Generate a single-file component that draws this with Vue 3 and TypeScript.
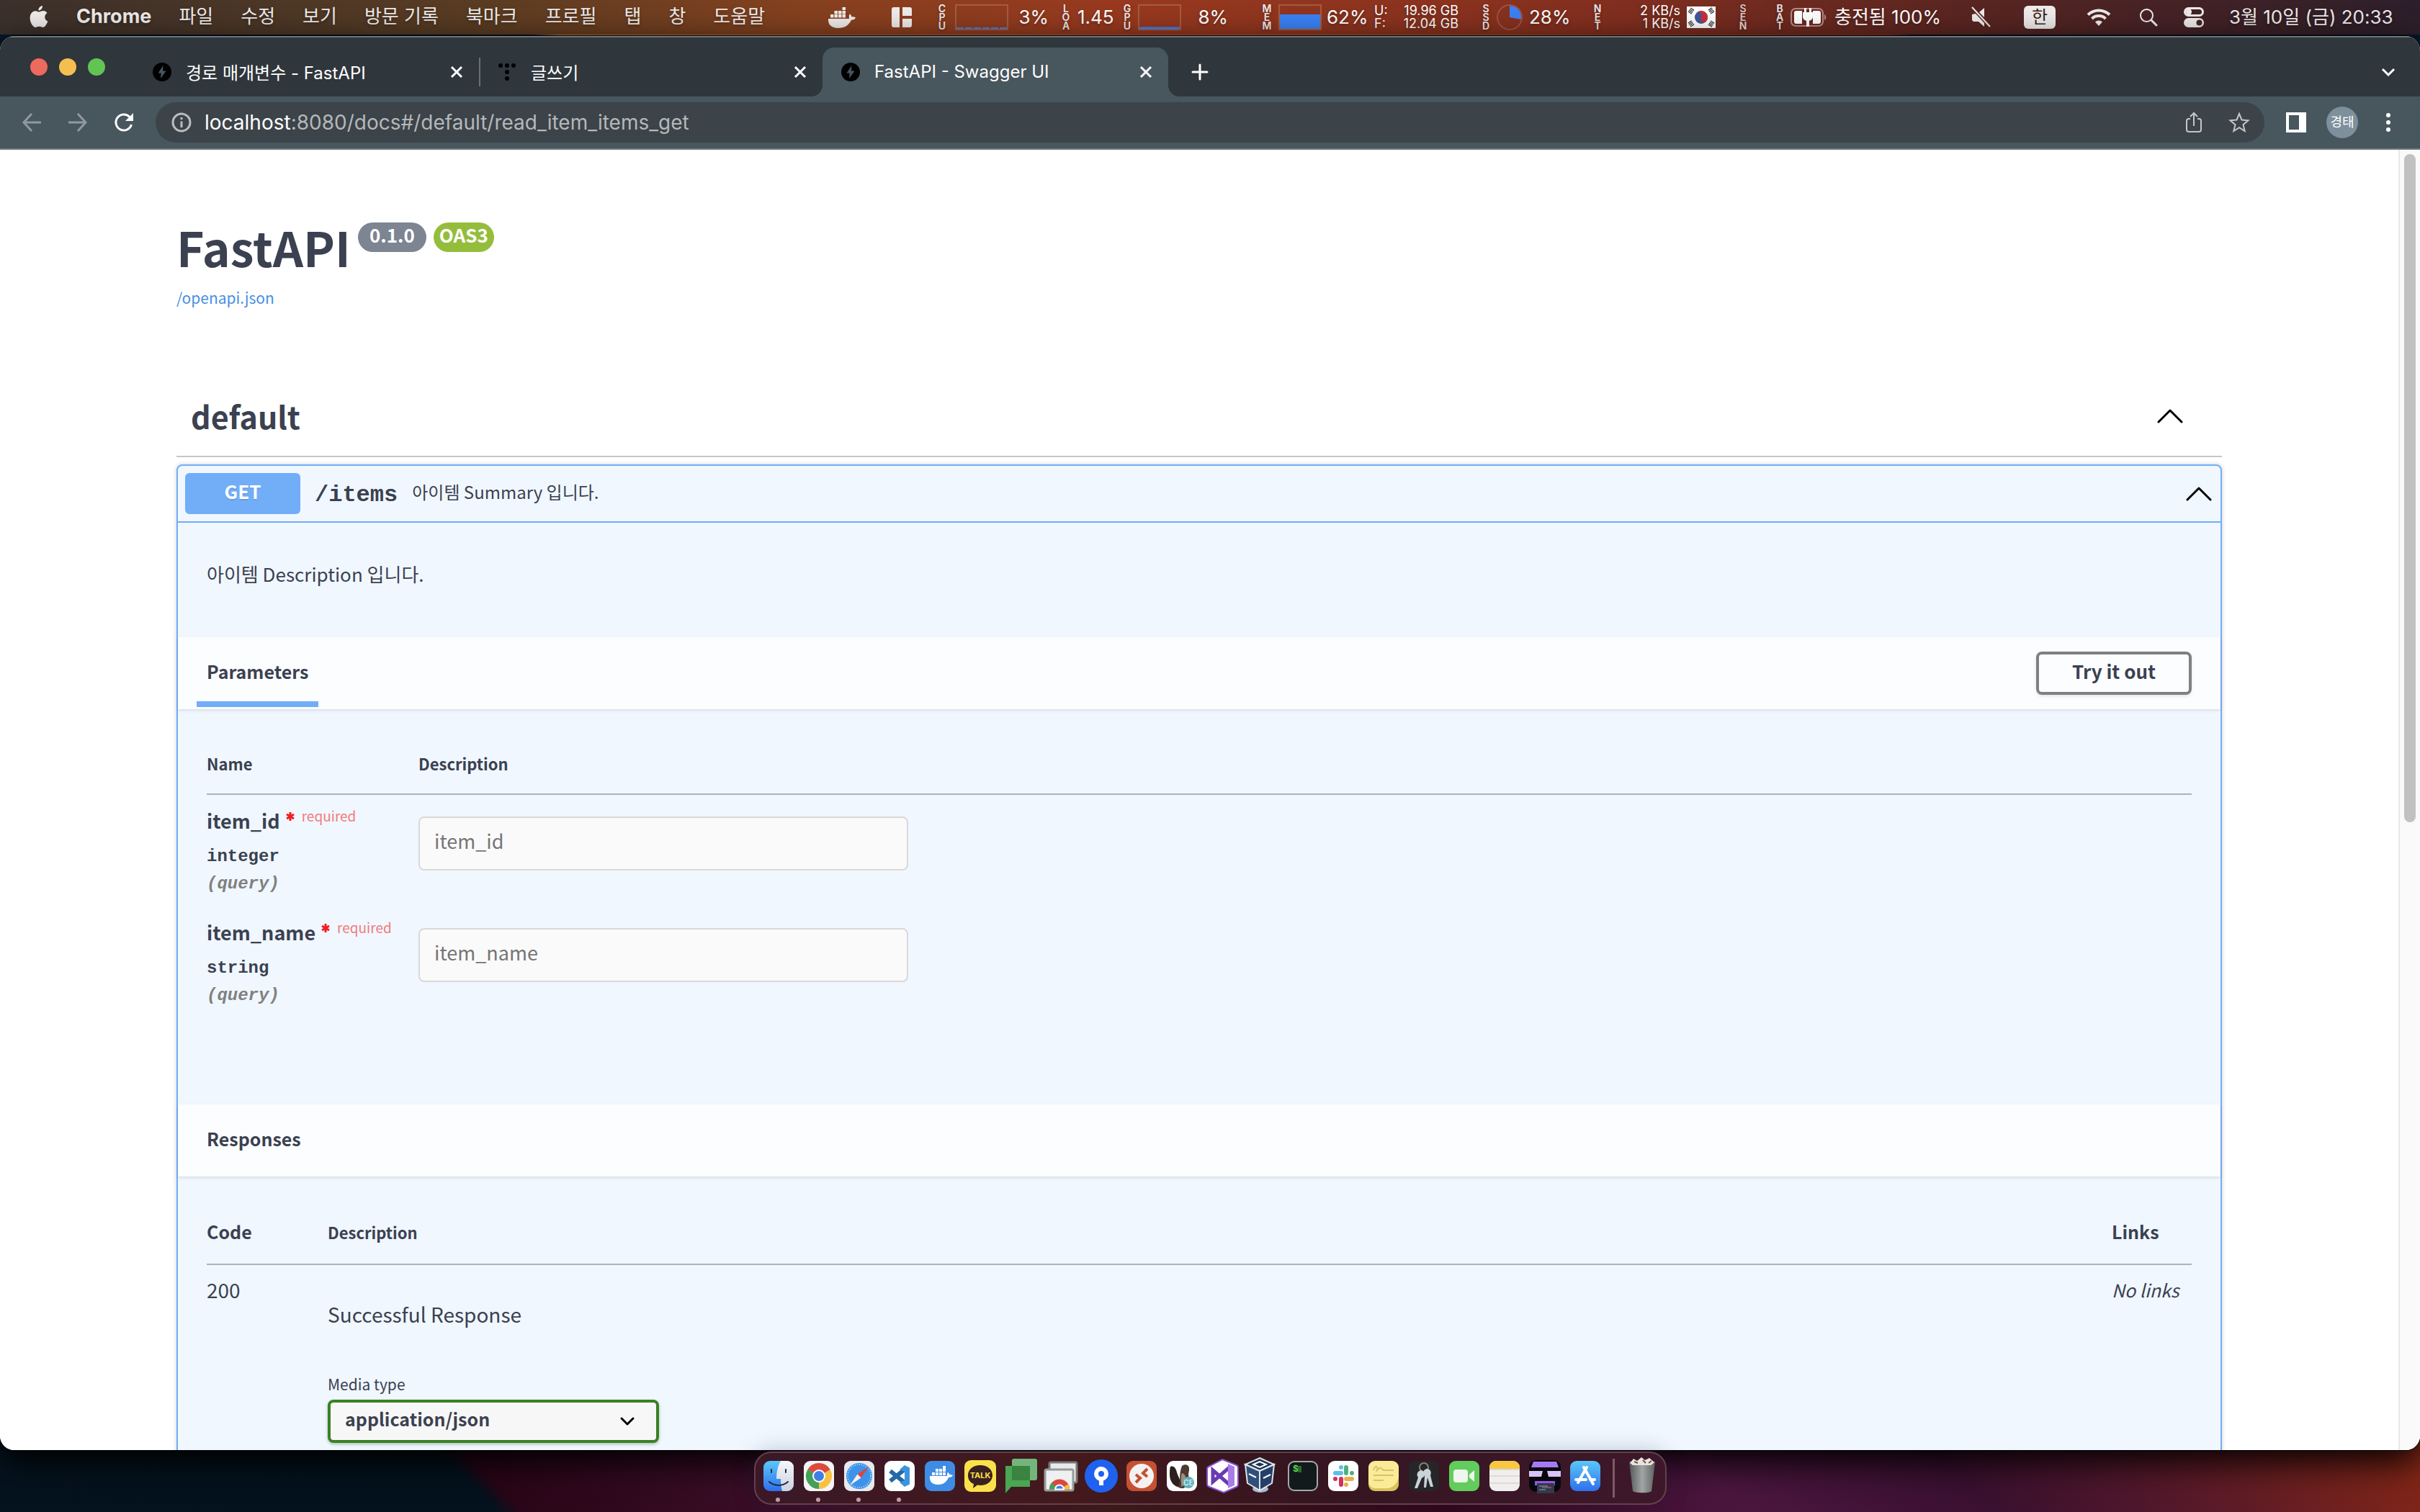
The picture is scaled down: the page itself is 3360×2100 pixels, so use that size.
<script setup lang="ts">
import { ref } from 'vue'

interface Param {
  name: string
  type: string
  place: string
}

interface Tab {
  title: string
  icon: 'bolt' | 'dots'
  active: boolean
}

const menus: string[] = ['파일', '수정', '보기', '방문 기록', '북마크', '프로필', '탭', '창', '도움말']

const tabs: Tab[] = [
  { title: '경로 매개변수 - FastAPI', icon: 'bolt', active: false },
  { title: '글쓰기', icon: 'dots', active: false },
  { title: 'FastAPI - Swagger UI', icon: 'bolt', active: true },
]

const params: Param[] = [
  { name: 'item_id', type: 'integer', place: '(query)' },
  { name: 'item_name', type: 'string', place: '(query)' },
]

const mediaType = ref('application/json')
</script>

<template>
  <div class="desktop">
    <header class="menubar">
      <nav class="menus">
        <svg class="apple" viewBox="0 0 26 32" aria-hidden="true">
          <path fill="#eeebea" d="M18 1c.3 3.600-2.600 6.600-5.600 6.600C12 4.400 15 1.300 18 1zM13.300 9.600c1.600 0 3-1.600 5.700-1.600 2.200 0 4.200 1.100 5.500 3-4.800 3-4 9.700.9 11.600C24 26.500 21.400 31 18.700 31c-2 0-2.700-1.200-5.200-1.200S10.200 31 8.400 31C4.700 31 .6 23.800.6 18.200.6 12 4.200 8.200 8.200 8.200c2.300 0 3.800 1.400 5.100 1.400z" />
        </svg>
        <strong class="app-name">Chrome</strong>
        <span v-for="m in menus" :key="m">{{ m }}</span>
      </nav>
      <div class="status">
        <svg width="44" height="32" viewBox="0 0 44 32" aria-hidden="true">
          <g fill="#eeebea">
            <path d="M5 18h29c.2-2-1-4 .8-6.500 1.700 1 2.500 2.600 2.500 4 2-.5 4 0 5.700 1-1 2.200-3 3.200-6 3.200C34 27 27 31 19 31 9 31 4.500 26 5 18z" />
            <path d="M8 12h4.500v4.500H8zM13.500 12H18v4.500h-4.500zM19 12h4.500v4.500H19zM24.500 12H29v4.500h-4.500zM13.500 7H18v4.500h-4.500zM19 7h4.500v4.500H19zM24.500 7H29v4.500h-4.500zM24.500 2H29v4h-4.500z" />
          </g>
        </svg>
        <svg width="40" height="30" viewBox="0 0 40 30" aria-hidden="true">
          <path fill="#eeebea" d="M9 1h8v28H9a3 3 0 0 1-3-3V4a3 3 0 0 1 3-3zM21 1h10a3 3 0 0 1 3 3v9H21zM21 17h13v9a3 3 0 0 1-3 3H21z" />
        </svg>
        <span class="vlabel"><i>C</i><i>P</i><i>U</i></span>
        <svg width="74" height="36" viewBox="0 0 74 36" aria-hidden="true">
          <rect x="1" y="1" width="72" height="34" fill="none" stroke="#a55c40" stroke-width="2" />
          <path stroke="#3b82f6" stroke-width="2" stroke-dasharray="10 2" d="M2 33h70" />
        </svg>
        <span class="figure end16">3%</span>
        <span class="vlabel"><i>L</i><i>O</i><i>A</i></span>
        <span class="figure">1.45</span>
        <span class="vlabel"><i>G</i><i>P</i><i>U</i></span>
        <svg width="60" height="36" viewBox="0 0 60 36" aria-hidden="true">
          <rect x="1" y="1" width="58" height="34" fill="none" stroke="#a55c40" stroke-width="2" />
          <path stroke="#3b82f6" stroke-width="3" d="M2 33h56" />
        </svg>
        <span class="figure end46">8%</span>
        <span class="vlabel"><i>M</i><i>E</i><i>M</i></span>
        <svg width="60" height="36" viewBox="0 0 60 36" aria-hidden="true">
          <rect x="1" y="1" width="58" height="34" fill="none" stroke="#a55c40" stroke-width="2" />
          <path fill="#3b82f6" d="M2 14h56v20H2z" />
        </svg>
        <span class="figure">62%</span>
        <span class="pair"><i>U:</i><i>F:</i></span>
        <span class="pair right end30"><i>19.96 GB</i><i>12.04 GB</i></span>
        <span class="vlabel"><i>S</i><i>S</i><i>D</i></span>
        <svg width="36" height="36" viewBox="0 0 36 36" aria-hidden="true">
          <circle cx="18" cy="18" r="17" fill="none" stroke="#a0523f" stroke-width="2" />
          <path fill="#3b82f6" d="M18 18V2a16 16 0 0 1 15.700 19z" />
        </svg>
        <span class="figure">28%</span>
        <span class="vlabel"><i>N</i><i>E</i><i>T</i></span>
        <span class="pair right end9"><i>2 KB/s</i><i>1 KB/s</i></span>
        <svg width="40" height="30" viewBox="0 0 40 30" aria-hidden="true">
          <path fill="#fff" d="M0 0h40v30H0z" />
          <circle cx="20" cy="15" r="9" fill="#3f57a0" />
          <path fill="#c8303a" d="M12.500 10a9 9 0 0 1 15 10 4.500 4.500 0 0 1-7.500-5 4.500 4.500 0 0 0-7.500-5z" />
          <path stroke="#111" stroke-width="6" stroke-dasharray="1 1" d="M4 9l4-6M32 3l4 6M4 21l4 6M32 27l4-6" />
        </svg>
        <span class="vlabel dim"><i>S</i><i>E</i><i>N</i></span>
        <span class="vlabel"><i>B</i><i>A</i><i>T</i></span>
        <svg width="50" height="26" viewBox="0 0 50 26" aria-hidden="true">
          <rect x="1" y="1" width="44" height="24" rx="6" fill="none" stroke="#b88a85" stroke-width="2" />
          <path fill="#b88a85" d="M47 9c3 1 3 7 0 8z" />
          <path fill="#fff" d="M8 4h8v18H8a3 3 0 0 1-3-3V7a3 3 0 0 1 3-3zM31 4h8a3 3 0 0 1 3 3v12a3 3 0 0 1-3 3h-8zM19 0h3v6h4V0h3v6h2v6c0 4-3 5-5 6v8h-4v-8c-2-1-5-2-5-6V6h2z" />
        </svg>
        <span class="figure">충전됨 100%</span>
        <svg width="32" height="30" viewBox="0 0 32 30" aria-hidden="true">
          <path fill="#eeebea" d="M4 11l5-1 12 13V28l-8-7H6l-2-2zM14 8l7-6v13z" />
          <path stroke="#eeebea" stroke-width="2" d="M4 1l25 27" />
        </svg>
        <span class="ime">한</span>
        <svg width="34" height="26" viewBox="0 0 34 26" aria-hidden="true">
          <g fill="none" stroke="#eeebea" stroke-width="4">
            <path d="M2 9.500a21.500 21.500 0 0 1 30 0M7.500 15a13.500 13.500 0 0 1 19 0" />
          </g>
          <path fill="#eeebea" d="M17 25l-5-5.500a7 7 0 0 1 10 0z" />
        </svg>
        <svg width="26" height="26" viewBox="0 0 26 26" aria-hidden="true">
          <path fill="none" stroke="#eeebea" stroke-width="3" stroke-linecap="round" d="M17 17l7 7" />
          <circle cx="10.500" cy="10.500" r="8.500" fill="none" stroke="#eeebea" stroke-width="2" />
        </svg>
        <svg width="28" height="28" viewBox="0 0 28 28" aria-hidden="true">
          <rect x="1.500" y="1.500" width="25" height="10" rx="5" fill="none" stroke="#eeebea" stroke-width="3" />
          <circle cx="7" cy="6.500" r="4" fill="#eeebea" />
          <rect y="15" width="28" height="13" rx="6.500" fill="#eeebea" />
          <circle cx="21.500" cy="21.500" r="4" fill="#4a2126" />
        </svg>
        <time class="clock">3월 10일 (금) 20:33</time>
      </div>
    </header>

    <section class="window">
      <div class="tabstrip">
        <div class="lights"><i class="red"></i><i class="amber"></i><i class="green"></i></div>
        <div v-for="t in tabs" :key="t.title" class="tab" :class="{ active: t.active }">
          <svg v-if="t.icon === 'bolt'" class="favicon" viewBox="0 0 26 26" aria-hidden="true">
            <circle cx="13" cy="13" r="13" fill="#000" />
            <path class="bolt" d="M14.500 4L7.500 14.500h4.200L11 22l7.500-10.500h-4.500z" />
          </svg>
          <svg v-else class="favicon" viewBox="0 0 26 26" aria-hidden="true">
            <path stroke="#000" stroke-width="6" stroke-linecap="round" d="M4 4h0M13 4h0M22 4h0M13 13h0M13 22h0" />
          </svg>
          <span class="tab-title">{{ t.title }}</span>
          <button class="icon-btn" type="button" aria-label="Close tab">
            <svg width="18" height="18" viewBox="0 0 18 18"><path stroke="#fff" stroke-width="3" d="M2 2l14 14M16 2L2 16" /></svg>
          </button>
        </div>
        <button class="icon-btn new-tab" type="button" aria-label="New tab">
          <svg width="24" height="24" viewBox="0 0 24 24"><path stroke="#fff" stroke-width="3" stroke-linecap="round" d="M12 2v20M2 12h20" /></svg>
        </button>
        <button class="icon-btn tab-search" type="button" aria-label="Search tabs">
          <svg width="20" height="12" viewBox="0 0 20 12"><path fill="none" stroke="#fff" stroke-width="3" d="M2 2l8 8 8-8" /></svg>
        </button>
      </div>

      <div class="toolbar">
        <button class="icon-btn" type="button" aria-label="Back">
          <svg width="28" height="28" viewBox="0 0 28 28"><path fill="none" stroke="#8f999f" stroke-width="3" d="M27 14H3M14 2L3 14l11 12" /></svg>
        </button>
        <button class="icon-btn" type="button" aria-label="Forward">
          <svg width="28" height="28" viewBox="0 0 28 28"><path fill="none" stroke="#8f999f" stroke-width="3" d="M1 14h24M14 2l11 12-11 12" /></svg>
        </button>
        <button class="icon-btn" type="button" aria-label="Reload">
          <svg width="28" height="28" viewBox="0 0 28 28"><path fill="none" stroke="#fff" stroke-width="3" d="M24.500 17A11 11 0 1 1 22 6.500" /><path fill="#fff" d="M27 1v11H16z" /></svg>
        </button>
        <div class="omnibox">
          <svg width="28" height="28" viewBox="0 0 28 28" aria-hidden="true">
            <circle cx="14" cy="14" r="12" fill="none" stroke="#b9bdc0" stroke-width="3" />
            <path stroke="#b9bdc0" stroke-width="3" d="M14 12.500V21M14 7v3" />
          </svg>
          <span class="url"><b>localhost</b>:8080/docs#/default/read_item_items_get</span>
          <button class="icon-btn" type="button" aria-label="Share">
            <svg width="24" height="30" viewBox="0 0 24 30"><path fill="none" stroke="#c3c6c8" stroke-width="2" d="M7 10H5a3 3 0 0 0-3 3v12a3 3 0 0 0 3 3h14a3 3 0 0 0 3-3V13a3 3 0 0 0-3-3h-2M12 20V3M7 7l5-5 5 5" /></svg>
          </button>
          <button class="icon-btn" type="button" aria-label="Bookmark">
            <svg width="30" height="30" viewBox="0 0 30 30"><path fill="none" stroke="#c3c6c8" stroke-width="2" d="M15 3l3.500 8.500 9 .7-7 6 2.200 8.800L15 22.200 7.300 27l2.200-8.800-7-6 9-.7z" /></svg>
          </button>
        </div>
        <button class="icon-btn" type="button" aria-label="Side panel">
          <svg width="28" height="28" viewBox="0 0 28 28"><path fill="#fff" d="M0 0h28v28H0zM4 4v20h14V4z" fill-rule="evenodd" /></svg>
        </button>
        <span class="avatar">경태</span>
        <button class="icon-btn more" type="button" aria-label="Menu">
          <svg width="8" height="28" viewBox="0 0 8 28"><path stroke="#fff" stroke-width="6" stroke-linecap="round" d="M4 4h0M4 14h0M4 24h0" /></svg>
        </button>
      </div>

      <div class="viewport">
        <main class="page">
          <div class="info">
            <h1>FastAPI</h1>
            <span class="badge">0.1.0</span>
            <span class="badge oas">OAS3</span>
          </div>
          <a class="spec-link" href="#openapi">/openapi.json</a>

          <h3 class="tag">
            <span>default</span>
            <svg width="36" height="20" viewBox="0 0 36 20" aria-hidden="true"><path fill="none" stroke="#000" stroke-width="3" stroke-linecap="round" stroke-linejoin="round" d="M2 18L18 2l16 16" /></svg>
          </h3>

          <article class="opblock">
            <div class="summary">
              <button class="method" type="button">GET</button>
              <span class="path">/items</span>
              <span class="summary-text">아이템 Summary 입니다.</span>
              <svg width="36" height="20" viewBox="0 0 36 20" aria-hidden="true"><path fill="none" stroke="#000" stroke-width="3" stroke-linecap="round" stroke-linejoin="round" d="M2 18L18 2l16 16" /></svg>
            </div>
            <p class="description">아이템 Description 입니다.</p>

            <div class="section-head">
              <h4 class="tab-item">Parameters</h4>
              <button class="try" type="button">Try it out</button>
            </div>
            <div class="params">
              <table>
                <thead>
                  <tr><th class="c-name">Name</th><th>Description</th></tr>
                </thead>
                <tbody>
                  <tr v-for="p in params" :key="p.name">
                    <td>
                      <div class="p-name">
                        <label :for="p.name">{{ p.name }}</label>
                        <svg width="12" height="12" viewBox="0 0 12 12" aria-hidden="true"><path stroke="#f01e1e" stroke-width="3" d="M6 0v12M1 3l10 6M11 3L1 9" /></svg>
                        <span>required</span>
                      </div>
                      <div class="p-type">{{ p.type }}</div>
                      <div class="p-in">{{ p.place }}</div>
                    </td>
                    <td class="p-input"><input :id="p.name" type="text" :placeholder="p.name" /></td>
                  </tr>
                </tbody>
              </table>
            </div>

            <div class="section-head"><h4>Responses</h4></div>
            <div class="responses">
              <table>
                <thead>
                  <tr><th class="c-code big">Code</th><th>Description</th><th class="c-links big">Links</th></tr>
                </thead>
                <tbody>
                  <tr>
                    <td class="status-code">200</td>
                    <td class="resp">
                      <p>Successful Response</p>
                      <label for="media">Media type</label>
                      <div class="select">
                        <select id="media" v-model="mediaType">
                          <option>application/json</option>
                        </select>
                        <svg width="22" height="14" viewBox="0 0 22 14" aria-hidden="true"><path fill="none" stroke="#000" stroke-width="3" stroke-linecap="round" stroke-linejoin="round" d="M3 3l8 8 8-8" /></svg>
                      </div>
                    </td>
                    <td><i>No links</i></td>
                  </tr>
                </tbody>
              </table>
            </div>
          </article>
        </main>
        <div class="scrollbar"><div class="thumb"></div></div>
      </div>
    </section>

    <footer class="dock-area">
      <div class="dock">
        <div class="slot running">
          <svg viewBox="0 0 56 56" aria-label="Finder">
            <defs>
              <linearGradient id="fi" x2="0" y2="1"><stop stop-color="#5ac8fa" /><stop offset="1" stop-color="#2f6fea" /></linearGradient>
              <linearGradient id="gr" x2="0" y2="1"><stop stop-color="#f5f7fa" /><stop offset="1" stop-color="#ccd3df" /></linearGradient>
            </defs>
            <rect x="7" y="7" width="42" height="42" rx="9" fill="url(#fi)" />
            <path fill="url(#gr)" d="M31 7h9a9 9 0 0 1 9 9v24a9 9 0 0 1-9 9h-7c-1.500-5-2-10-2-17h-6c0-10 2-18 6-25z" />
            <path fill="none" stroke="#1d2c45" stroke-width="2" stroke-linecap="round" d="M18 19v4M38 19v4M15 36c7 6.500 19 6.500 26 0" />
          </svg>
        </div>
        <div class="slot running">
          <svg viewBox="0 0 56 56" aria-label="Chrome">
            <rect x="7" y="7" width="42" height="42" rx="9" fill="#f4f4f4" />
            <path fill="#dd4b3e" d="M28 28L12.400 19a18 18 0 0 1 31.200 0z" />
            <path fill="#f7c244" d="M28 28l15.600-9A18 18 0 0 1 28 46z" />
            <path fill="#44a058" d="M28 28v18A18 18 0 0 1 12.400 19z" />
            <path fill="#dd4b3e" d="M28 19h15.600L28 28z" />
            <path fill="#44a058" d="M12.400 19l7.800 13.500L28 28z" />
            <path fill="#f7c244" d="M28 46l7.800-13.500L28 28z" />
            <circle cx="28" cy="28" r="9" fill="#fff" /><circle cx="28" cy="28" r="7" fill="#3f7ee8" />
          </svg>
        </div>
        <div class="slot running">
          <svg viewBox="0 0 56 56" aria-label="Safari">
            <rect x="7" y="7" width="42" height="42" rx="9" fill="#e8eaed" />
            <circle cx="28" cy="28" r="18" fill="#3d93ea" />
            <circle cx="28" cy="28" r="16" fill="none" stroke="#b5dafa" stroke-width="2" stroke-dasharray="1 2" />
            <path fill="#e04338" d="M41 15L30.500 30.500l-5-5z" /><path fill="#f4f4f4" d="M15 41l10.500-15.500 5 5z" />
          </svg>
        </div>
        <div class="slot running">
          <svg viewBox="0 0 56 56" aria-label="Visual Studio Code">
            <rect x="7" y="7" width="42" height="42" rx="9" fill="#fff" />
            <path fill="none" stroke="#2468a8" stroke-width="6" d="M15 21l21 17M15 35l21-17" />
            <path fill="#3b95dc" d="M35 13l7 3.500v23L35 43l-7-6 7-3V22l-7-3z" />
          </svg>
        </div>
        <div class="slot">
          <svg viewBox="0 0 56 56" aria-label="Docker">
            <rect x="7" y="7" width="42" height="42" rx="9" fill="#3f8ce5" />
            <path fill="#fff" d="M14 28h24c0-2 0-4 1-5 2 1 2 2 2 3 2 0 3 0 5 1-1 2-3 3-6 3-3 7-8 10-15 10-8 0-12-5-11-12z" />
            <path stroke="#fff" stroke-width="4" stroke-dasharray="4 1" d="M17 25h19M22 20h14" /><path fill="#fff" d="M32 14h4v4h-4z" />
          </svg>
        </div>
        <div class="slot">
          <svg viewBox="0 0 56 56" aria-label="KakaoTalk">
            <rect x="6" y="6" width="44" height="44" rx="9" fill="#fae14b" />
            <path fill="#3b2020" d="M28 13c10 0 17 6 17 14s-7 14-17 14l-4-.5-6 4.500 1-6c-5-2-8-6-8-12 0-8 7-14 17-14z" />
            <text x="28" y="31" text-anchor="middle" font-size="11" font-weight="700" fill="#fae14b">TALK</text>
          </svg>
        </div>
        <div class="slot">
          <svg viewBox="0 0 56 56" aria-label="Chat">
            <path fill="#49a652" d="M7 14h34v29H15l-8 9z" />
            <rect x="16" y="4" width="35" height="30" rx="3" fill="#74b57c" />
            <path fill="#3b8340" d="M16 14h25v20H16z" />
          </svg>
        </div>
        <div class="slot">
          <svg viewBox="0 0 56 56" aria-label="Remote Desktop">
            <rect x="12" y="9" width="38" height="28" rx="2" fill="#e9eaeb" stroke="#777" stroke-width="3" />
            <rect x="6" y="19" width="39" height="29" rx="2" fill="#eff0f1" stroke="#98999a" stroke-width="3" />
            <path fill="#d9493c" d="M12 46.500a14 14 0 0 1 28 0z" /><path fill="#44a058" d="M12 46.500a14 14 0 0 1 3-9l11 9z" /><path fill="#f7c244" d="M40 46.500a14 14 0 0 0-2-7l-12 7z" />
            <path fill="#3f7ee8" stroke="#fff" stroke-width="2" d="M20 46.500a6 6 0 0 1 12 0z" />
          </svg>
        </div>
        <div class="slot">
          <svg viewBox="0 0 56 56" aria-label="Sourcetree">
            <circle cx="28" cy="28" r="23" fill="#2062f0" />
            <circle cx="28" cy="25" r="7" fill="none" stroke="#fff" stroke-width="6" /><path stroke="#fff" stroke-width="6" d="M28 32v9" />
          </svg>
        </div>
        <div class="slot">
          <svg viewBox="0 0 56 56" aria-label="Remote">
            <rect x="7" y="7" width="42" height="42" rx="9" fill="#c55032" />
            <circle cx="28" cy="28" r="17" fill="#f4f2f1" />
            <path fill="none" stroke="#c55032" stroke-width="4" d="M20 26l6 5-6 6M36 18l-6 6 6 5" />
          </svg>
        </div>
        <div class="slot">
          <svg viewBox="0 0 56 56" aria-label="DBeaver">
            <rect x="7" y="7" width="42" height="42" rx="9" fill="#fff" />
            <path fill="#2c211d" d="M12 15c5-2 8 3 9 8 2 7 6 10 5 21-9-1-15-8-15-18 0-4 0-8 1-11z" />
            <path fill="#4c3a30" d="M28 14c5-4 11-1 10 5 0 4-2 6 0 11 2 6-1 12-8 15-3 0-6 0-7-2 4-6 0-16 5-29z" />
            <path fill="#a58b76" d="M28 24c4 0 6 5 5 11-1 4-3 7-6 8 1-6-2-11 1-19z" />
            <circle cx="37" cy="37" r="8" fill="#5fb0bd" />
            <text x="37" y="41" text-anchor="middle" font-size="10" fill="#fff">CE</text>
          </svg>
        </div>
        <div class="slot">
          <svg viewBox="0 0 56 56" aria-label="Visual Studio">
            <path fill="#fff" stroke="#8350cf" stroke-width="2" d="M28 5l20 8q2 1 2 3v24q0 2-2 3l-18 8-20-8q-3-1-3-4V18q0-2 2-3z" />
            <path fill="none" stroke="#6a3bb0" stroke-width="5" d="M38 16L15 36V20l23 20" />
            <path fill="#a97de8" d="M36 11l9 4v26l-9 4z" />
          </svg>
        </div>
        <div class="slot">
          <svg viewBox="0 0 56 56" aria-label="VirtualBox">
            <ellipse cx="25" cy="46" rx="11" ry="5" fill="#aab9cc" />
            <path fill="#1d3450" stroke="#dfe6ee" stroke-width="2" d="M24 3l20 9-20 9L4 12z" />
            <path fill="#30507a" stroke="#dfe6ee" stroke-width="2" d="M4 12l20 9v27L7 38z" />
            <path fill="#24406a" stroke="#dfe6ee" stroke-width="2" d="M44 12l-20 9v27l17-10z" />
            <path fill="none" stroke="#fff" stroke-width="2" d="M15 12l9-4 9 4-9 4zM9 25l10 5M29 31l10-5" />
          </svg>
        </div>
        <div class="slot">
          <svg viewBox="0 0 56 56" aria-label="Terminal">
            <rect x="8" y="8" width="40" height="40" rx="8" fill="#131a1c" stroke="#a4a8aa" stroke-width="2" />
            <text x="14" y="22" font-size="12" font-weight="700" fill="#55d34c">$</text>
            <path fill="#2b6b29" d="M21 14h5v9h-5z" />
          </svg>
        </div>
        <div class="slot">
          <svg viewBox="0 0 56 56" aria-label="Slack">
            <rect x="7" y="7" width="42" height="42" rx="9" fill="#fff" />
            <g stroke-width="6" stroke-linecap="round">
              <path stroke="#5cc0ea" d="M17 24h8M25 16h0" /><path stroke="#4fb081" d="M32 16v8M40 24h0" />
              <path stroke="#e6b04a" d="M32 32h8M32 40h0" /><path stroke="#d2315c" d="M25 32v8M17 32h0" />
            </g>
          </svg>
        </div>
        <div class="slot">
          <svg viewBox="0 0 56 56" aria-label="Stickies">
            <rect x="7" y="9" width="42" height="40" rx="9" fill="#d8c35e" />
            <path fill="#faec97" d="M16 7h24a9 9 0 0 1 9 9v14c-2 8-7 13-14 15H16a9 9 0 0 1-9-9V16a9 9 0 0 1 9-9z" />
            <path fill="none" stroke="#d8c36a" stroke-width="2" d="M14 20c3-8 6-6 5 0 5-6 6-2 9 0h14M14 27h28M14 34h14" />
          </svg>
        </div>
        <div class="slot">
          <svg viewBox="0 0 56 56" aria-label="Keychain">
            <rect x="7" y="7" width="42" height="42" rx="9" fill="#26262a" />
            <circle cx="28" cy="16" r="6" fill="none" stroke="#8d8270" stroke-width="2" />
            <path fill="#c9d3d9" d="M24 20c4 1 6 5 4 9l-3 2-6 14h-4l5-15c-3-4-1-9 4-10zM32 18c5 0 7 5 5 9l4 16h-4l-4-13-2 14h-3l1-16c-3-4-2-9 3-10z" />
          </svg>
        </div>
        <div class="slot">
          <svg viewBox="0 0 56 56" aria-label="FaceTime">
            <rect x="7" y="7" width="42" height="42" rx="9" fill="#62cc5c" />
            <rect x="13" y="19" width="20" height="18" rx="4" fill="#eef6ee" /><path fill="#eef6ee" d="M35 26l7-6v16l-7-6z" />
          </svg>
        </div>
        <div class="slot">
          <svg viewBox="0 0 56 56" aria-label="Notes">
            <rect x="7" y="7" width="42" height="42" rx="9" fill="#f1efed" />
            <path fill="#f8c840" d="M7 18v-2a9 9 0 0 1 9-9h24a9 9 0 0 1 9 9v2z" />
            <path stroke="#cac7c3" d="M7 28h42M7 38h42" /><path stroke="#999" stroke-dasharray="1 1" d="M7 19h42" />
          </svg>
        </div>
        <div class="slot">
          <svg viewBox="0 0 56 56" aria-label="Robot">
            <rect x="6" y="6" width="44" height="44" rx="9" fill="#08080c" />
            <path fill="#a878f5" d="M12 8h32l3 8H9z" /><path fill="#d9c2fa" d="M6 21h19l-2 8H6zM31 21h19v8H33z" />
            <path fill="#9355ea" d="M14 35h28v6H14z" /><path fill="#343949" d="M17 38h24v14H17z" />
            <path stroke="#69b5c8" d="M20 42h12M20 47h9" /><path stroke="#e0667b" d="M24 44h13" />
          </svg>
        </div>
        <div class="slot">
          <svg viewBox="0 0 56 56" aria-label="App Store">
            <rect x="7" y="7" width="42" height="42" rx="9" fill="url(#fi)" />
            <path fill="none" stroke="#fff" stroke-width="4" stroke-linecap="round" d="M30 16L18 37M26 16l13 23M15 33h14M35 33h6" />
          </svg>
        </div>
        <div class="divider"></div>
        <div class="slot">
          <svg viewBox="0 0 56 56" aria-label="Trash">
            <defs><linearGradient id="tr"><stop stop-color="#555857" /><stop offset=".5" stop-color="#a2a5a5" /><stop offset="1" stop-color="#606362" /></linearGradient></defs>
            <path fill="url(#tr)" d="M10 8h36l-5 41c-3 3-23 3-26 0z" />
            <path fill="#e7e5e1" d="M11 10l5-6 5 3 6-5 5 4 6-3 7 6-5 4H15z" />
            <path stroke="#8c4a3c" stroke-width="2" d="M17 8l5 2M29 6l4 4M37 10l4-3" />
          </svg>
        </div>
      </div>
    </footer>
  </div>
</template>

<style>
html,
body {
  margin: 0;
  background: #06101c;
}
</style>

<style scoped>
* {
  box-sizing: border-box;
}
.desktop {
  display: flex;
  flex-direction: column;
  height: 100vh;
  overflow: hidden;
  font-family: Inter, "Noto Sans CJK KR", sans-serif;
  background:
    linear-gradient(90deg, #04182e 22%, #c8752f 23%, #b8501f 60%, #9a2a14 78%, #04182e 79%) 0 48px / 100% 2px no-repeat,
    linear-gradient(46deg, #05131f 0%, #04121d 20%, #2a0517 21%, #3d0f2a 33%, #401a16 45%, #33061a 58%, #4b163f 70%, #3a1030 80%, #56192a 88%, #8a2814 100%) bottom / 100% 106px no-repeat,
    #04182e;
}
.menubar {
  display: flex;
  justify-content: space-between;
  align-items: center;
  height: 48px;
  padding: 0 38px 0 40px;
  color: #eeebea;
  font-size: 26px;
  line-height: 36px;
  white-space: nowrap;
  background: linear-gradient(90deg, #3b302b 0%, #5a3c22 20%, #84411f 33%, #98391f 46%, #832f1f 66%, #5a2521 81%, #2c1f2b 100%);
  text-shadow: 0 2px 4px rgba(0, 0, 0, 0.3);
}
.menus {
  display: flex;
  align-items: center;
  gap: 38px;
  padding-bottom: 2px;
}
.apple {
  width: 28px;
  height: 32px;
}
.app-name {
  font-size: 27px;
  font-weight: 700;
}
.status {
  display: grid;
  align-items: center;
  grid-template-columns: 87px 68px 26px 74px 72px 24px 61px 23px 60px 111px 24px 67px 66px 25px 122px 23px 45px 87px 30px 102px 70px 51px 23px 61px 187px 76px 87px 73px 62px 63px 227px;
}
.vlabel {
  display: flex;
  flex-direction: column;
  align-items: center;
  width: 16px;
  font-size: 14px;
  font-weight: 600;
  line-height: 12px;
}
.vlabel.dim {
  opacity: 0.8;
}
i {
  font-style: normal;
}
.figure {
  color: #fff;
}
.end16 {
  padding-right: 16px;
  text-align: right;
}
.end46 {
  padding-right: 46px;
  text-align: right;
}
.pair {
  display: flex;
  flex-direction: column;
  font-size: 18px;
  line-height: 18px;
  color: #fff;
}
.right {
  text-align: right;
}
.end30 {
  padding-right: 30px;
}
.end9 {
  padding-right: 9px;
}
.ime {
  width: 44px;
  height: 32px;
  border-radius: 6px;
  background: #eeebea;
  color: #3a1f22;
  font-size: 24px;
  line-height: 32px;
  text-align: center;
  text-shadow: none;
}
.clock {
  text-align: right;
}
.window {
  display: flex;
  flex-direction: column;
  flex: 1;
  min-height: 0;
  margin-top: 2px;
  border-radius: 20px;
  overflow: hidden;
  background: #fff;
  box-shadow: 0 0 0 1px #000, 0 16px 50px #000;
}
.tabstrip {
  display: flex;
  align-items: flex-end;
  height: 84px;
  border-top: 2px solid #6f777b;
  background: #2f363c;
}
.lights {
  display: flex;
  gap: 16px;
  width: 188px;
  padding: 0 0 29px 42px;
}
.lights i {
  width: 24px;
  height: 24px;
  border-radius: 50%;
}
.red {
  background: #ed6a5e;
}
.amber {
  background: #f5bf4f;
}
.green {
  background: #61c554;
}
.tab {
  position: relative;
  display: flex;
  align-items: center;
  gap: 20px;
  width: 477px;
  height: 68px;
  padding: 0 22px 0 26px;
  color: #fff;
  font-size: 24px;
}
.tab:nth-child(2) {
  padding-left: 24px;
}
.tab:nth-child(3)::before {
  content: "";
  position: absolute;
  left: 0;
  top: 14px;
  width: 2px;
  height: 40px;
  background: #6b7075;
}
.tab.active {
  width: 480px;
  border-radius: 16px 16px 0 0;
  background: #48565e;
}
.tab.active::before,
.tab.active::after {
  content: "";
  position: absolute;
  bottom: 0;
  width: 16px;
  height: 16px;
}
.tab.active::before {
  right: 100%;
  background: radial-gradient(circle at 0 0, transparent 16px, #48565e 16px);
}
.tab.active::after {
  left: 100%;
  background: radial-gradient(circle at 100% 0, transparent 16px, #48565e 16px);
}
.favicon {
  width: 26px;
  height: 26px;
  flex: none;
}
.bolt {
  fill: #48565e;
}
.tab-title {
  flex: 1;
  padding-bottom: 2px;
  white-space: nowrap;
}
.icon-btn {
  display: flex;
  align-items: center;
  justify-content: center;
  flex: none;
  padding: 0;
  border: 0;
  background: none;
}
.new-tab {
  height: 68px;
  margin-left: 32px;
}
.tab-search {
  height: 68px;
  margin: 0 34px 0 auto;
}
.toolbar {
  display: flex;
  align-items: center;
  gap: 36px;
  height: 74px;
  padding: 0 40px 0 30px;
  border-bottom: 2px solid #72797e;
  background: #48565e;
}
.omnibox {
  display: flex;
  align-items: center;
  gap: 36px;
  flex: 1;
  height: 56px;
  margin: 0 -6px;
  padding: 0 20px 0 22px;
  border-radius: 28px;
  background: #3c4349;
}
.url {
  flex: 1;
  margin-left: -18px;
  color: #b4b8ba;
  font-size: 28px;
  line-height: 36px;
}
.url b {
  color: #fff;
  font-weight: 400;
}
.avatar {
  width: 44px;
  height: 44px;
  margin: 0 2px 0 -8px;
  border-radius: 50%;
  background: #7d909c;
  color: #fff;
  font-size: 18px;
  line-height: 44px;
  text-align: center;
}
.viewport {
  display: flex;
  flex: 1;
  min-height: 0;
  background: #fff;
}
.page {
  flex: 1;
  max-width: 2920px;
  margin: 0 auto;
  padding: 92px 40px 0;
  color: #3b4151;
  font-family: "Noto Sans CJK KR", sans-serif;
  font-size: 28px;
}
.scrollbar {
  width: 30px;
  padding: 6px;
  border-left: 2px solid #e8e8e8;
  background: #fafafa;
}
.thumb {
  height: 928px;
  border-radius: 8px;
  background: #c1c1c1;
}
.info {
  display: flex;
  gap: 10px;
}
h1 {
  margin: 0;
  font-size: 66px;
  line-height: 84px;
}
.badge {
  height: 41px;
  margin-top: 9px;
  padding: 0 16px;
  border-radius: 21px;
  background: #7d8492;
  color: #fff;
  font-size: 26px;
  font-weight: 700;
  line-height: 34px;
}
.badge.oas {
  padding: 0 8px;
  background: #95bd3c;
}
.spec-link {
  display: block;
  margin-top: 13px;
  color: #4990e2;
  font-size: 21px;
  line-height: 32px;
  text-decoration: none;
}
.tag {
  display: flex;
  align-items: center;
  justify-content: space-between;
  height: 112px;
  margin: 94px 0 10px;
  padding: 0 54px 0 20px;
  border-bottom: 2px solid rgba(59, 65, 81, 0.3);
  font-size: 43px;
  line-height: 56px;
}
.tag span {
  padding-bottom: 2px;
}
.opblock {
  border: 2px solid #72adf8;
  border-radius: 8px;
  background: #f0f7ff;
  box-shadow: 0 0 6px rgba(0, 0, 0, 0.19);
}
.summary {
  display: flex;
  align-items: center;
  height: 79px;
  padding: 0 12px 0 10px;
  border-bottom: 2px solid #72adf8;
}
.summary > svg {
  margin-left: auto;
}
.method {
  width: 160px;
  height: 57px;
  padding: 0 0 8px;
  border: 0;
  border-radius: 6px;
  background: #72adf8;
  color: #fff;
  font: 700 26px "Noto Sans CJK KR", sans-serif;
  text-shadow: 0 2px 0 rgba(0, 0, 0, 0.1);
}
.path {
  padding: 4px 20px 0;
  font: 700 32px "Liberation Mono", monospace;
}
.summary-text {
  padding-bottom: 6px;
  font-size: 24px;
}
.description {
  margin: 0;
  padding: 51px 40px 68px;
  font-size: 26px;
  line-height: 40px;
}
.section-head {
  display: flex;
  align-items: center;
  justify-content: space-between;
  height: 100px;
  padding: 0 40px;
  background: #fcfdff;
  box-shadow: 0 2px 4px rgba(0, 0, 0, 0.1);
}
h4 {
  margin: 0;
  font-size: 25px;
  line-height: 32px;
  padding-bottom: 6px;
}
.tab-item {
  align-self: flex-end;
  margin: 0 -14px 3px;
  padding: 0 14px 26px;
  border-bottom: 8px solid #72adf8;
}
.try {
  width: 216px;
  height: 60px;
  padding: 0 0 8px;
  border: 4px solid #808080;
  border-radius: 8px;
  background: transparent;
  box-shadow: 0 2px 4px rgba(0, 0, 0, 0.1);
  color: #3b4151;
  font: 700 26px "Noto Sans CJK KR", sans-serif;
}
.params {
  padding: 40px 40px 120px;
}
.responses {
  padding: 40px;
}
table {
  width: 100%;
  border-collapse: separate;
  border-spacing: 0;
}
th {
  padding: 21px 0 28px;
  border-bottom: 2px solid #aab3c0;
  font-size: 22px;
  line-height: 28px;
  text-align: left;
  vertical-align: baseline;
}
td {
  padding: 18px 0 17px;
  line-height: 32px;
  vertical-align: top;
  font-size: 25px;
}
.status-code {
  font-size: 28px;
}
.c-name {
  width: 294px;
}
.p-name {
  display: flex;
  height: 36px;
  font-size: 27px;
  font-weight: 700;
  line-height: 36px;
}
.p-name svg {
  margin: 6px 10px 0 8px;
}
.p-name span {
  color: #f27c7c;
  font-size: 19px;
  font-weight: 400;
  line-height: 22px;
}
.p-type {
  margin-top: 18px;
  font: 700 24px/28px "Liberation Mono", monospace;
}
.p-in {
  margin-top: 10px;
  color: #808080;
  font: italic 700 24px/28px "Liberation Mono", monospace;
}
.p-input {
  padding-top: 30px;
}
input {
  display: block;
  width: 680px;
  height: 75px;
  padding: 0 20px 8px;
  border: 2px solid #d9d9d9;
  border-radius: 8px;
  background: #fafafa;
  font: 27px "Noto Sans CJK KR", sans-serif;
}
td.p-input {
  padding: 30px 0 0;
}
input::placeholder {
  color: #757575;
}
.c-code {
  width: 168px;
}
.c-links {
  width: 111px;
}
.big {
  padding: 20px 0 29px;
  font-size: 25px;
  line-height: 32px;
}
td.resp {
  padding-top: 50px;
}
.resp p {
  margin: 0 0 65px;
  font-size: 28px;
  line-height: 36px;
}
.resp label {
  display: block;
  font-size: 21px;
  line-height: 28px;
}
.select {
  position: relative;
  width: 460px;
  margin-top: 8px;
}
.select svg {
  position: absolute;
  right: 33px;
  top: 23px;
}
select {
  display: block;
  width: 100%;
  height: 60px;
  padding: 0 20px 8px;
  appearance: none;
  border: 4px solid #388222;
  border-radius: 8px;
  background: #f7f7f7;
  box-shadow: 0 2px 4px rgba(0, 0, 0, 0.25);
  color: #3b4151;
  font: 700 25px "Noto Sans CJK KR", sans-serif;
}
td i {
  font-style: italic;
}
.dock-area {
  display: flex;
  justify-content: center;
  padding: 2px 0 10px;
}
.dock {
  position: relative;
  display: flex;
  padding: 4px;
  height: 74px;
  border: 2px solid #65404a;
  border-radius: 24px;
  background: linear-gradient(90deg, #3a1827, #43191c 35%, #351520 60%, #3d182b);
  box-shadow: 0 0 30px rgba(20, 30, 60, 0.25);
}
.slot {
  position: relative;
  width: 56px;
}
.slot svg {
  display: block;
  width: 56px;
  height: 56px;
}
.running::after {
  content: "";
  position: absolute;
  left: 24px;
  top: 58px;
  width: 6px;
  height: 6px;
  border-radius: 50%;
  background: #c49aa8;
}
.divider {
  width: 3px;
  height: 54px;
  margin: 4px 10px;
  background: #7c5a66;
}
</style>
